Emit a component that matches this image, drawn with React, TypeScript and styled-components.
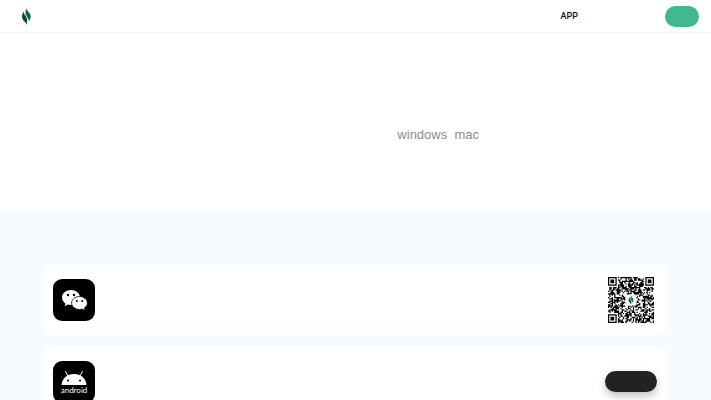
import React from "react";
import styled, { createGlobalStyle } from "styled-components";

const GlobalStyle = createGlobalStyle`
  *, *::before, *::after { box-sizing: border-box; }
  body {
    margin: 0;
    background: #f6fbff;
    font-family: "Liberation Sans", "Noto Sans CJK SC", sans-serif;
  }
`;

const Page = styled.div`
  height: 100vh;
  overflow: hidden;
`;

const Header = styled.header`
  display: flex;
  align-items: center;
  height: 33px;
  padding: 0 12px 0 22px;
  background: #fff;
  border-bottom: 1px solid #f2f3f4;
`;

const HomeLink = styled.a`
  display: flex;
`;

const Nav = styled.nav`
  display: flex;
  margin-left: auto;
  margin-right: 87px;
`;

const NavLink = styled.a`
  color: #111;
  font-family: Roboto, sans-serif;
  font-size: 9px;
  line-height: 12px;
  font-weight: 500;
  text-decoration: none;
`;

const Pill = styled.button<{ $dark?: boolean }>`
  flex: none;
  width: ${(p) => (p.$dark ? 52 : 34)}px;
  height: 21px;
  padding: 0;
  border: 0;
  border-radius: 11px;
  background: ${(p) => (p.$dark ? "#222" : "#42b98d")};
  box-shadow: ${(p) => (p.$dark ? "0 4px 8px rgba(0, 0, 0, 0.25)" : "none")};
  cursor: pointer;
`;

const Hero = styled.section`
  display: flex;
  justify-content: flex-end;
  height: 178px;
  padding: 92px 232px 0 0;
  background: #fff;
`;

const Platforms = styled.p`
  margin: 0;
  color: #8c8c8c;
  font-size: 13px;
  line-height: 20px;
  white-space: pre;
`;

const Downloads = styled.section`
  display: flex;
  flex-direction: column;
  gap: 11px;
  padding: 53px 44px 40px 43px;
`;

const Card = styled.article`
  display: flex;
  align-items: center;
  justify-content: space-between;
  min-height: 71px;
  padding: 12px 10px;
  border-radius: 10px;
  background: #fff;
`;

const AppIcon = styled.svg`
  width: 42px;
  height: 42px;
`;

const QrImage = styled.svg`
  width: 46px;
  height: 46px;
  margin-right: 3px;
`;

const LeafShape = () => (
  <>
    <path
      fill="#08694a"
      d="M4 0C4.500 3 8.700 4.500 8.700 8.500 8.700 10.500 7.800 12 7 13.500 7 10 3.600 8.500 3.500 5 3.500 3 4 1.500 4 0Z"
    />
    <path
      fill="#0a4a35"
      d="M4.700 17C4.200 14 0 12.500 0 8.500 0 6.500 .9 5 1.700 3.500 1.700 7 5.100 8.500 5.200 12 5.200 14 4.700 15.500 4.700 17Z"
    />
  </>
);

const Logo = () => (
  <svg width="9" height="17" viewBox="0 0 9 17" aria-hidden="true">
    <LeafShape />
  </svg>
);

const WeChatIcon = () => (
  <AppIcon viewBox="0 0 42 42" role="img" aria-label="WeChat">
    <rect width="42" height="42" rx="9" />
    <g fill="#fff">
      <path d="M18 11C13 11 9 14.300 9 18.500c0 2.400 1.300 4.500 3.500 5.900l-.9 2.800 3.300-1.700c1 .3 2 .4 3.100.4 5 0 9-3.300 9-7.400S23 11 18 11Z" />
      <path
        stroke="#000"
        strokeWidth="0.8"
        d="M26.500 17.500c-4.400 0-7.900 2.900-7.900 6.500s3.500 6.500 7.900 6.500c.9 0 1.800-.1 2.600-.4l3 1.600-.8-2.600c1.900-1.200 3.100-3 3.100-5.100 0-3.600-3.500-6.500-7.900-6.500Z"
      />
    </g>
    <circle cx="15" cy="16" r="1.200" />
    <circle cx="21" cy="16" r="1.200" />
    <circle cx="23.900" cy="22" r="1" />
    <circle cx="29.100" cy="22" r="1" />
  </AppIcon>
);

const AndroidIcon = () => (
  <AppIcon viewBox="0 0 42 42" role="img" aria-label="Android">
    <rect width="42" height="42" rx="9" />
    <path fill="#fff" d="M8.500 24C9 17.500 14 13 21 13s12 4.500 12.500 11Z" />
    <path
      stroke="#fff"
      strokeWidth="1"
      strokeLinecap="round"
      d="m15 15-2.400-4.500M27 15l2.400-4.500"
    />
    <circle cx="15" cy="19.500" r="1.100" />
    <circle cx="27" cy="19.500" r="1.100" />
    <text
      x="21"
      y="32"
      fill="#fff"
      textAnchor="middle"
      fontFamily="Lato, sans-serif"
      fontSize="8"
      fontWeight="400"
    >
      android
    </text>
  </AppIcon>
);

const QR_SIZE = 37;

const inFinderZone = (x: number, y: number) =>
  (x < 8 && y < 8) || (x > QR_SIZE - 9 && y < 8) || (x < 8 && y > QR_SIZE - 9);

const buildModules = () => {
  let seed = 20731;
  let path = "";
  for (let y = 0; y < QR_SIZE; y++) {
    for (let x = 0; x < QR_SIZE; x++) {
      seed = (seed * 48271) % 2147483647;
      const filled = seed / 2147483647 < 0.54;
      if (filled && !inFinderZone(x, y)) path += `M${x} ${y}h1v1h-1z`;
    }
  }
  return path;
};

const MODULES = buildModules();

const Finder = ({ x, y }: { x: number; y: number }) => (
  <path
    fillRule="evenodd"
    d={`M${x} ${y}h7v7h-7zM${x + 1} ${y + 1}v5h5v-5zM${x + 2} ${y + 2}h3v3h-3z`}
  />
);

const QrCode = () => (
  <QrImage viewBox={`0 0 ${QR_SIZE} ${QR_SIZE}`} role="img" aria-label="QR code">
    <path d={MODULES} />
    <Finder x={0} y={0} />
    <Finder x={QR_SIZE - 7} y={0} />
    <Finder x={0} y={QR_SIZE - 7} />
    <rect x="14" y="14" width="9" height="9" rx="1" fill="#fff" />
    <g transform="translate(16.500 14.700) scale(.45)">
      <LeafShape />
    </g>
  </QrImage>
);

export default function App() {
  return (
    <Page>
      <GlobalStyle />
      <Header>
        <HomeLink href="#" aria-label="Home">
          <Logo />
        </HomeLink>
        <Nav>
          <NavLink href="#app">APP</NavLink>
        </Nav>
        <Pill type="button" aria-label="Sign in" />
      </Header>
      <main>
        <Hero>
          <Platforms>{"windows  mac"}</Platforms>
        </Hero>
        <Downloads id="app">
          <Card>
            <WeChatIcon />
            <QrCode />
          </Card>
          <Card>
            <AndroidIcon />
            <Pill type="button" $dark aria-label="Download" />
          </Card>
        </Downloads>
      </main>
    </Page>
  );
}
